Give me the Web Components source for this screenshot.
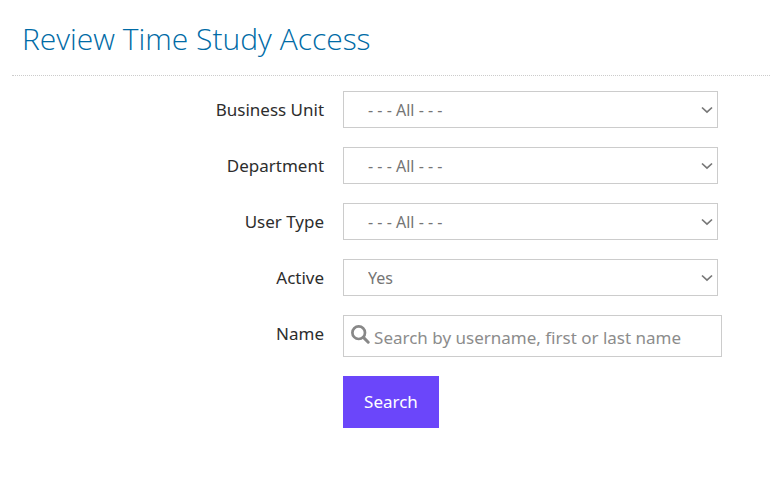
<!DOCTYPE html>
<html lang="en">
<head>
<meta charset="utf-8">
<meta name="viewport" content="width=device-width, initial-scale=1">
<title>Review Time Study Access</title>
<style>
  body {
    margin: 0;
    background: #fff;
    color: #2d2d2d;
    font-family: "Noto Sans", "Open Sans", sans-serif;
    font-size: 17px;
    line-height: 24px;
  }
</style>
</head>
<body>
<page-panel>
  <span slot="title">Review Time Study Access</span>
  <search-form>
    <select-field label="Business Unit" name="unit" options="- - - All - - -"></select-field>
    <select-field label="Department" name="department" options="- - - All - - -"></select-field>
    <select-field label="User Type" name="type" options="- - - All - - -"></select-field>
    <select-field label="Active" name="active" options="Yes,No"></select-field>
    <search-field label="Name" name="name" placeholder="Search by username, first or last name"></search-field>
    <submit-button>Search</submit-button>
  </search-form>
</page-panel>

<script>
// row shared by every field: label on the left, control on the right
const rowStyles = `
  :host {
    display: grid;
    grid-template-columns: minmax(0, 14fr) minmax(0, 17fr);
    column-gap: 19px;
  }
  label {
    text-align: right;
    padding-top: 7px;
  }
  .control {
    display: grid;
    align-items: center;
    box-sizing: border-box;
    border: 1px solid #ccc;
    background: #fff;
  }
  .control > * {
    grid-area: 1 / 1;
  }
  select, input {
    box-sizing: border-box;
    width: 100%;
    margin: 0;
    border: 0;
    border-radius: 0;
    background: transparent;
    font-family: inherit;
  }
  svg {
    pointer-events: none;
  }
`;

class PagePanel extends HTMLElement {
  constructor() {
    super();
    this.attachShadow({ mode: "open" }).innerHTML = `
      <style>
        :host {
          display: block;
          padding-left: 12px;
        }
        header {
          padding: 17px 10px 15px;
          border-bottom: 1px dotted #ccc;
        }
        h1 {
          margin: 0;
          color: #006ba6;
          font-family: "Open Sans", "Noto Sans", sans-serif;
          font-size: 30px;
          font-weight: 300;
          line-height: 43px;
        }
      </style>
      <header><h1><slot name="title"></slot></h1></header>
      <main><slot></slot></main>
    `;
  }
}

class SearchForm extends HTMLElement {
  constructor() {
    super();
    this.attachShadow({ mode: "open" }).innerHTML = `
      <style>
        :host {
          display: block;
          padding: 15px 48px 48px 0;
        }
        form {
          display: flex;
          flex-direction: column;
          gap: 19px;
        }
      </style>
      <form><slot></slot></form>
    `;
  }
}

class SelectField extends HTMLElement {
  constructor() {
    super();
    this.attachShadow({ mode: "open" });
  }
  connectedCallback() {
    const options = this.getAttribute("options").split(",");
    this.shadowRoot.innerHTML = `
      <style>
        ${rowStyles}
        .control {
          height: 37px;
          margin-right: 4px;
        }
        select {
          appearance: none;
          height: 35px;
          padding: 0 32px 0 24px;
          color: #757575;
          font-size: 16px;
        }
        svg {
          justify-self: end;
          margin-right: 4px;
        }
      </style>
      <label for="field">${this.getAttribute("label")}</label>
      <div class="control">
        <select id="field" name="${this.getAttribute("name")}">
          ${options.map((text) => `<option>${text}</option>`).join("")}
        </select>
        <svg width="12" height="8" viewBox="0 0 12 8" fill="none" stroke="#777" stroke-width="1.7" aria-hidden="true">
          <path d="M1 1.5 6 6.2 11 1.5"/>
        </svg>
      </div>
    `;
  }
}

class SearchField extends HTMLElement {
  constructor() {
    super();
    this.attachShadow({ mode: "open" });
  }
  connectedCallback() {
    this.shadowRoot.innerHTML = `
      <style>
        ${rowStyles}
        .control {
          height: 42px;
        }
        input {
          height: 40px;
          padding: 2px 8px 0 30px;
          color: #2d2d2d;
          font-size: 17px;
        }
        input::placeholder {
          color: #8c8c8c;
          opacity: 1;
        }
        svg {
          align-self: start;
          margin: 9px 0 0 7px;
        }
      </style>
      <label for="field">${this.getAttribute("label")}</label>
      <div class="control">
        <input id="field" type="text" name="${this.getAttribute("name")}" placeholder="${this.getAttribute("placeholder")}">
        <svg width="19" height="19" viewBox="0 0 19 19" fill="none" stroke="#888" aria-hidden="true">
          <circle cx="7.7" cy="7.7" r="6.3" stroke-width="2.7"/>
          <path d="M12.4 12.4 17.2 17.2" stroke-width="3" stroke-linecap="round"/>
        </svg>
      </div>
    `;
  }
}

class SubmitButton extends HTMLElement {
  constructor() {
    super();
    this.attachShadow({ mode: "open" }).innerHTML = `
      <style>
        ${rowStyles}
        button {
          grid-column: 2;
          justify-self: start;
          padding: 14px 21px;
          border: 0;
          background: #6b46fa;
          color: #fff;
          font: inherit;
          cursor: pointer;
        }
      </style>
      <button type="submit"><slot></slot></button>
    `;
  }
}

customElements.define("page-panel", PagePanel);
customElements.define("search-form", SearchForm);
customElements.define("select-field", SelectField);
customElements.define("search-field", SearchField);
customElements.define("submit-button", SubmitButton);
</script>
</body>
</html>
